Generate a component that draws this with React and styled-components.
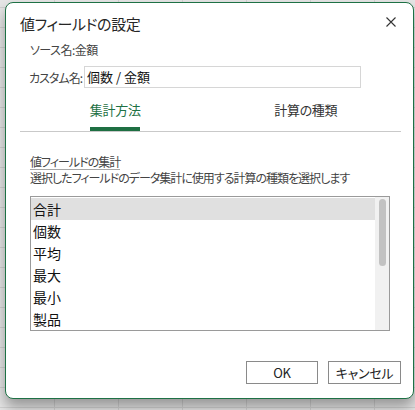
import React from "react";
import styled, { createGlobalStyle } from "styled-components";

const Global = createGlobalStyle`
  html, body { margin: 0; padding: 0; }
  body {
    font-family: "Noto Sans CJK JP", "Noto Sans", sans-serif;
    font-feature-settings: "palt";
    background: #e4e4e4;
  }
  * { box-sizing: border-box; }
`;

const Page = styled.div`
  width: 415px;
  height: 410px;
  padding: 2px 2px 12px 5px;
  background-color: #e6e6e6;
  background-image:
    linear-gradient(to bottom, #d2d2d2 1px, transparent 1px),
    linear-gradient(to right, #d2d2d2 1px, transparent 1px);
  background-size: 100% 20px, 64px 100%;
  background-position: 0 7px, 54px 0;
  overflow: hidden;
`;

const Dialog = styled.div`
  width: 409px;
  height: 397px;
  display: flex;
  flex-direction: column;
  background: #ffffff;
  border: 1px solid #1e7145;
  border-radius: 8px;
  box-shadow: 0 8px 14px rgba(0, 0, 0, 0.35);
`;

const Header = styled.div`
  display: flex;
  justify-content: space-between;
  align-items: flex-start;
  padding: 10px 14px 0 14px;
`;

const Title = styled.div`
  font-size: 15px;
  line-height: 22px;
  color: #262626;
  letter-spacing: -0.4px;
`;

const CloseButton = styled.div`
  width: 16px;
  height: 16px;
  margin-top: 1px;
  display: flex;
  align-items: center;
  justify-content: center;
`;

const Body = styled.div`
  padding-left: 24px;
  display: flex;
  flex-direction: column;
  align-items: flex-start;
`;

const InfoRow = styled.div`
  margin-top: 6px;
  height: 18px;
  font-size: 12px;
  line-height: 18px;
  color: #444;
  letter-spacing: -0.5px;
`;

const CustomRow = styled.div`
  margin-top: 7px;
  display: flex;
  align-items: center;
  gap: 2px;
  margin-left: -1px;
`;

const Label = styled.span`
  font-size: 12px;
  color: #444;
  letter-spacing: -1px;
`;

const NameInput = styled.div`
  width: 277px;
  height: 22px;
  border: 1px solid #d6d6d6;
  padding-left: 2px;
  font-size: 13px;
  line-height: 20px;
  color: #111;
`;

const TabBar = styled.div`
  margin: 0 12px 0 14px;
  display: grid;
  grid-template-columns: 1fr 1fr;
  border-bottom: 1px solid #c9c9c9;
`;

const Tab = styled.div`
  height: 43px;
  display: flex;
  flex-direction: column;
  align-items: center;
  padding-top: 13px;
  font-size: 13px;
  line-height: 18px;
  letter-spacing: -0.3px;
  color: ${(p) => (p.$active ? "#1e7145" : "#333")};
`;

const TabIndicator = styled.div`
  margin-top: auto;
  width: 50px;
  height: 4px;
  background: ${(p) => (p.$active ? "#1e6f42" : "transparent")};
`;

const Section = styled.div`
  padding-left: 24px;
  display: flex;
  flex-direction: column;
  align-items: flex-start;
`;

const GroupLabel = styled.div`
  margin-top: 22px;
  font-size: 12px;
  line-height: 15px;
  color: #444;
  letter-spacing: -1px;
  border-bottom: 1px solid #a6a6a6;
`;

const Description = styled.div`
  font-size: 12px;
  line-height: 16px;
  color: #444;
  letter-spacing: -1px;
`;

const ListBox = styled.div`
  margin-top: 10px;
  width: 360px;
  height: 135px;
  border: 1px solid #9a9a9a;
  display: flex;
`;

const Items = styled.div`
  flex: 1;
  padding-top: 1px;
`;

const Item = styled.div`
  height: 22px;
  padding-left: 2px;
  font-size: 14px;
  line-height: 22px;
  color: #111;
  background: ${(p) => (p.$selected ? "#e0e0e0" : "transparent")};
`;

const ScrollTrack = styled.div`
  width: 14px;
  background: #f1f1f1;
  padding: 2px 3px 0 4px;
`;

const ScrollThumb = styled.div`
  width: 7px;
  height: 67px;
  border-radius: 4px;
  background: #c2c2c2;
`;

const ButtonRow = styled.div`
  margin-top: auto;
  display: flex;
  justify-content: flex-end;
  gap: 10px;
  padding: 0 12px 14px 0;
`;

const Button = styled.div`
  width: ${(p) => p.$w}px;
  height: 23px;
  border: 1px solid #8a8a8a;
  display: flex;
  align-items: center;
  justify-content: center;
  font-size: 13px;
  color: #222;
  letter-spacing: -0.3px;
`;

const items = ["合計", "個数", "平均", "最大", "最小", "製品"];

export default function App() {
  return (
    <>
      <Global />
      <Page>
        <Dialog>
          <Header>
            <Title>値フィールドの設定</Title>
            <CloseButton>
              <svg width="10" height="10" viewBox="0 0 10 10">
                <path d="M0.5 0.5 L9.5 9.5 M9.5 0.5 L0.5 9.5" stroke="#333" strokeWidth="1.1" />
              </svg>
            </CloseButton>
          </Header>
          <Body>
            <InfoRow>ソース名:金額</InfoRow>
            <CustomRow>
              <Label>カスタム名:</Label>
              <NameInput>個数 / 金額</NameInput>
            </CustomRow>
          </Body>
          <TabBar>
            <Tab $active>
              集計方法
              <TabIndicator $active />
            </Tab>
            <Tab>
              計算の種類
              <TabIndicator />
            </Tab>
          </TabBar>
          <Section>
            <GroupLabel>値フィールドの集計</GroupLabel>
            <Description>選択したフィールドのデータ集計に使用する計算の種類を選択します</Description>
            <ListBox>
              <Items>
                {items.map((it, i) => (
                  <Item key={it} $selected={i === 0}>{it}</Item>
                ))}
              </Items>
              <ScrollTrack>
                <ScrollThumb />
              </ScrollTrack>
            </ListBox>
          </Section>
          <ButtonRow>
            <Button $w={72}>OK</Button>
            <Button $w={73}>キャンセル</Button>
          </ButtonRow>
        </Dialog>
      </Page>
    </>
  );
}
